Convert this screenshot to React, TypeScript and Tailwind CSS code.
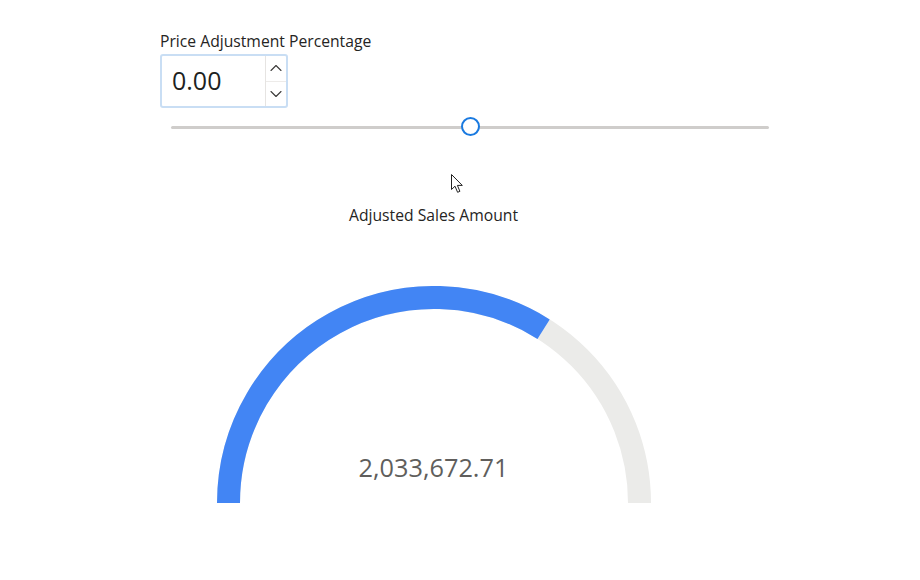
import { ChevronUp, ChevronDown } from 'lucide-react';

export default function App() {
  const value = 2033672.71;
  const max = 2995000;
  const frac = value / max;

  // gauge geometry (svg coords)
  const cx = 217;
  const cy = 217;
  const r = 205.5;
  const phi = Math.PI * (1 - frac);
  const ex = cx + r * Math.cos(phi);
  const ey = cy - r * Math.sin(phi);

  return (
    <div className="relative w-[920px] h-[580px] bg-white pl-[160px] pt-[31px] text-[#252423]" style={{ fontFamily: '"Open Sans", "Noto Sans", sans-serif' }}>
      <div className="text-[15.7px] leading-[21px]">Price Adjustment Percentage</div>

      <div className="mt-[2px] flex w-[128px] h-[54px] rounded-[3px] border-2 border-[#c9def4] bg-white">
        <div className="flex-1 flex items-center pl-[10px] text-[25px] text-[#201f1e]">0.00</div>
        <div className="w-[21px] flex flex-col border-l border-[#e6e4e2]">
          <div className="flex-1 flex items-center justify-center border-b border-[#edebe9] text-[#3b3a39]">
            <ChevronUp size={20} strokeWidth={1.3} />
          </div>
          <div className="flex-1 flex items-center justify-center text-[#3b3a39]">
            <ChevronDown size={20} strokeWidth={1.3} />
          </div>
        </div>
      </div>

      <div className="relative ml-[11px] mt-[9px] w-[598px] h-[20px] flex items-center">
        <div className="w-full h-[3px] rounded-full bg-[#cfcdcb]" />
        <div className="absolute left-[290px] top-[0px] w-[19px] h-[19px] rounded-full border-2 border-[#1a7ae0] bg-white" />
      </div>

      <div className="w-[547px] mt-[68px] flex flex-col items-center">
        <div className="text-[15.7px] leading-[21px]">Adjusted Sales Amount</div>
        <div className="relative mt-[60px] w-[434px] h-[217px]">
          <svg width="434" height="217" viewBox="0 0 434 217">
            <path d={`M ${cx - r} ${cy} A ${r} ${r} 0 0 1 ${cx + r} ${cy}`} fill="none" stroke="#ebebe9" strokeWidth="23" />
            <path d={`M ${cx - r} ${cy} A ${r} ${r} 0 0 1 ${ex} ${ey}`} fill="none" stroke="#4285f4" strokeWidth="23" />
          </svg>
          <div className="absolute left-0 right-0 top-[163px] text-center text-[25.3px] leading-[36px] text-[#605e5c]">
            {value.toLocaleString('en-US', { minimumFractionDigits: 2 })}
          </div>
        </div>
      </div>

      <svg className="absolute left-[451px] top-[174px]" width="13" height="20" viewBox="0 0 13 20">
        <path d="M0.5 0.5 L0.5 15.5 L4 12.2 L6.6 18.3 L8.9 17.3 L6.4 11.4 L11.3 11.4 Z" fill="white" stroke="#222" strokeWidth="1" strokeLinejoin="round" />
      </svg>
    </div>
  );
}
